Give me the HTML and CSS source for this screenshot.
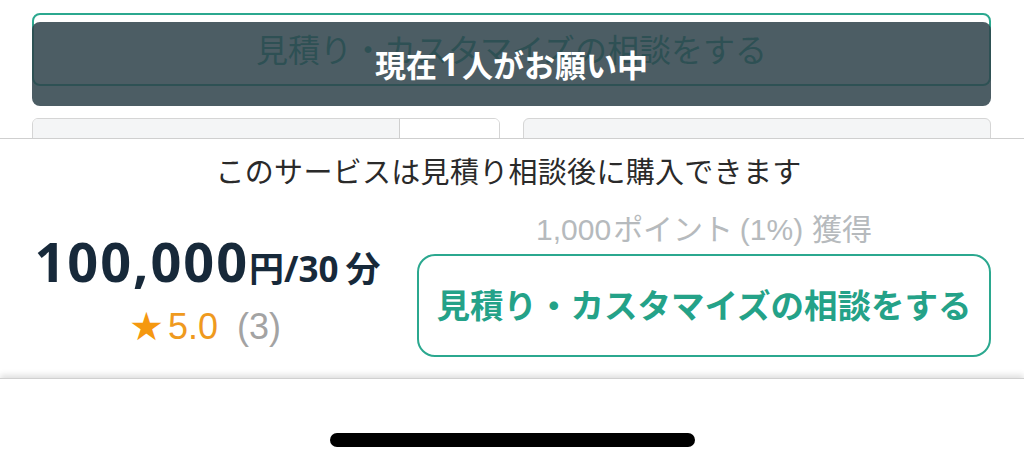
FILE: index.html
```html
<!DOCTYPE html>
<html lang="ja">
<head>
<meta charset="utf-8">
<link rel="stylesheet" href="styles.css">
</head>
<body>
<div class="screen">
  <div class="behind">
    <div class="consult-btn-bg">見積り・カスタマイズの相談をする</div>
    <div class="tooltip">現在<span class="num">1</span>人がお願い中</div>
    <div class="boxes">
      <div class="box box-split"><div class="box-main"></div><div class="box-side"></div></div>
      <div class="box box-grey"></div>
    </div>
  </div>
  <div class="sheet">
    <p class="notice">このサービスは見積り相談後に購入できます</p>
    <div class="row">
      <div class="price-col">
        <div class="price"><span class="amount">100,000</span><span class="unit">円</span><span class="per">/30</span><span class="unit min">分</span></div>
        <div class="rating"><span class="star">★</span><span class="score">5.0</span><span class="count">(3)</span></div>
      </div>
      <div class="action-col">
        <div class="points"><span class="lat">1,000</span>ポイント <span class="lat">(1%)</span> 獲得</div>
        <button class="consult-btn">見積り・カスタマイズの相談をする</button>
      </div>
    </div>
  </div>
  <div class="home">
    <div class="home-indicator"></div>
  </div>
</div>
</body>
</html>
```

FILE: styles.css
```css
* { box-sizing: border-box; }
html, body { margin: 0; padding: 0; background: #fff; }
body { font-family: "Noto Sans CJK JP", "Noto Sans", sans-serif; }
.screen { width: 1024px; height: 468px; overflow: hidden; display: flex; flex-direction: column; }

.behind { position: relative; height: 138px; overflow: hidden; padding: 13px 33px 0 32px; flex: none; }
.consult-btn-bg {
  height: 73px; border: 2px solid #2ba88f; border-radius: 8px;
  display: flex; align-items: center; justify-content: center;
  color: #2aa58c; font-size: 32px; padding-bottom: 4px;
}
.tooltip {
  position: absolute; left: 32px; right: 33px; top: 22px; height: 84px;
  background: rgba(47, 66, 74, 0.86); border-radius: 8px;
  color: #fff; font-weight: 700; font-size: 31px;
  display: flex; align-items: center; justify-content: center; padding-bottom: 2px;
}
.tooltip .num { font-family: "Open Sans", sans-serif; font-weight: 700; font-size: 33px; margin: 0 3px; }
.boxes { display: grid; grid-template-columns: 1fr 1fr; gap: 23px; margin-top: 32px; }
.box { height: 60px; border: 1px solid #d5d5d5; border-radius: 6px; overflow: hidden; }
.box-split { display: flex; }
.box-main { width: 367px; background: #f4f5f6; border-right: 1px solid #cfcfcf; }
.box-side { flex: 1; background: #fff; }
.box-grey { background: #f4f5f6; }

.sheet { flex: none; height: 240px; border-top: 1px solid #cfcfcf; background: #fff; padding: 12px 33px 0 26px; }
.notice { margin: 0; text-align: center; font-size: 29px; line-height: 38px; color: #2a2a2a; letter-spacing: 0.3px; }
.row { display: flex; gap: 26px; margin-top: 18px; }
.price-col { display: flex; flex-direction: column; align-items: center; padding-top: 24px; width: 365px; flex: none; }
.price { color: #17293a; font-weight: 700; line-height: 60px; white-space: nowrap; display: flex; align-items: baseline; padding-right: 2px; }
.amount { font-family: "Open Sans", sans-serif; font-size: 54px; letter-spacing: 2px; }
.unit { font-size: 35px; font-weight: 700; }
.per { font-family: "Open Sans", sans-serif; font-size: 35px; }
.min { margin-left: 7px; }
.rating { display: flex; align-items: center; line-height: 40px; margin-top: 8px; font-family: "Liberation Sans", Arial, sans-serif; font-size: 36px; padding-right: 7px; }
.star { color: #f5980f; font-size: 39px; margin-right: 4px; font-family: "DejaVu Sans", sans-serif; }
.score { color: #ef9a1e; margin-right: 19px; }
.count { color: #a3a3a3; }

.action-col { flex: 1; display: flex; flex-direction: column; align-items: center; }
.points { color: #b6babd; font-size: 30px; line-height: 40px; white-space: nowrap; }
.points .lat { font-family: "Liberation Sans", Arial, sans-serif; margin-right: 2px; }
.consult-btn {
  margin-top: 4px; width: 100%; height: 103px;
  border: 2px solid #2ba88f; border-radius: 18px; background: #fff;
  color: #24a288; font-family: "Noto Sans CJK JP", sans-serif; font-weight: 700; font-size: 33.5px;
  display: flex; align-items: center; justify-content: center; padding: 0 0 4px;
}

.home { flex: 1; background: #fff; border-top: 1px solid #d0d0d0; box-shadow: 0 -3px 6px rgba(0,0,0,0.13); position: relative; display: flex; justify-content: center; }
.home-indicator { margin-top: 54px; width: 365px; height: 14px; border-radius: 7px; background: #000; }
```
